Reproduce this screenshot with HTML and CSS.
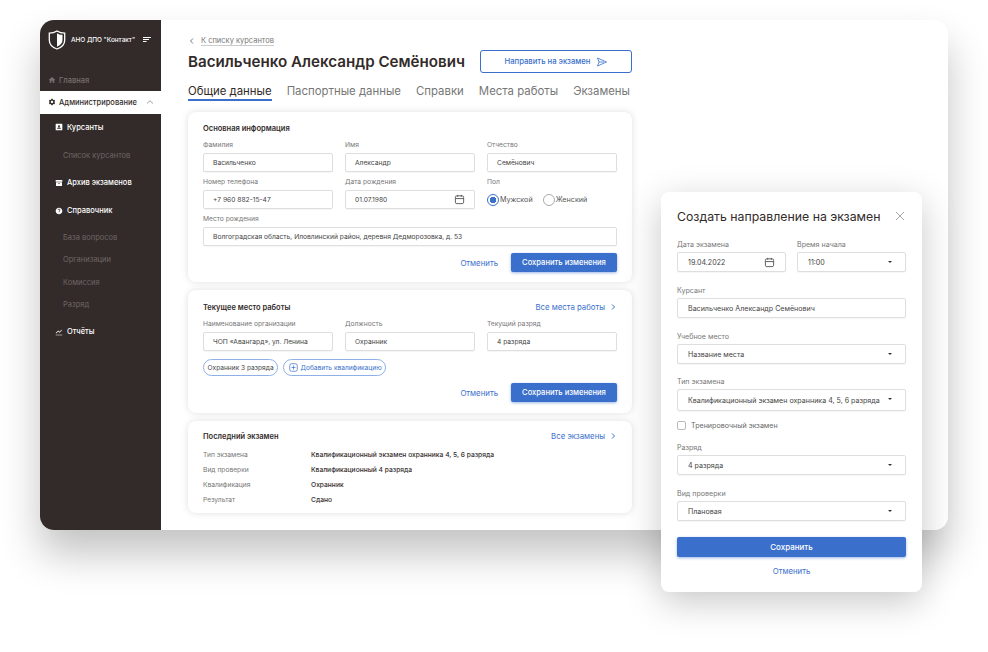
FILE: index.html
```html
<!DOCTYPE html>
<html lang="ru">
<head>
    <meta charset="UTF-8">
    <title>Васильченко Александр Семёнович</title>
    <link rel="stylesheet" href="styles.css">
</head>
<body>
    <svg class="sprite" width="0" height="0">
        <symbol id="i-calendar" viewBox="0 0 12 12">
            <rect x="1.5" y="2" width="9" height="8.5" rx="1.6" fill="none" stroke="currentColor"/>
            <path d="M1.5 5h9M4 1v2M8 1v2" fill="none" stroke="currentColor"/>
        </symbol>
        <symbol id="i-right" viewBox="0 0 8 8">
            <path d="M3 1.5 5.5 4 3 6.5" fill="none" stroke="currentColor"/>
        </symbol>
    </svg>

    <div class="window">
        <aside class="sidebar">
            <div class="brand">
                <svg class="brand-logo" viewBox="0 0 18 20">
                    <path d="M9 1C6.500 2.600 4 3.200 1.300 3.200V10c0 4.200 3.200 7.500 7.700 9 4.500-1.500 7.700-4.800 7.700-9V3.200C14 3.200 11.500 2.600 9 1z" fill="none" stroke="#fff" stroke-width="1.300"/>
                    <path d="M9 3.200c1.700 1 3.500 1.500 5.500 1.600V10c0 3-2.200 5.500-5.500 6.800z" fill="#fff"/>
                </svg>
                <span class="brand-name">АНО ДПО "Контакт"</span>
                <svg class="brand-menu" viewBox="0 0 8 6">
                    <path d="M0 .5h8M0 2.500h6M0 4.500h3.500" stroke="#fff" fill="none"/>
                </svg>
            </div>
            <nav class="nav">
                <a class="nav-top">
                    <svg class="nav-icon" viewBox="0 0 24 24"><path d="M10 20v-6h4v6h5v-8h3L12 3 2 12h3v8z"/></svg>
                    Главная
                </a>
                <a class="nav-top nav-open">
                    <svg class="nav-icon" viewBox="0 0 24 24"><path d="M19.140 12.940c.04-.3.06-.61.06-.94 0-.32-.02-.64-.07-.94l2.030-1.580c.18-.14.23-.41.12-.61l-1.920-3.320c-.12-.22-.37-.29-.59-.22l-2.390.96c-.5-.38-1.030-.7-1.620-.94l-.36-2.540c-.04-.24-.24-.41-.48-.41h-3.840c-.24 0-.43.17-.47.41l-.36 2.540c-.59.24-1.130.57-1.620.94l-2.390-.96c-.22-.08-.47 0-.59.22L2.740 8.870c-.12.21-.08.47.12.61l2.030 1.580c-.05.3-.09.63-.09.94s.02.64.07.94l-2.030 1.580c-.18.14-.23.41-.12.61l1.920 3.320c.12.22.37.29.59.22l2.390-.96c.5.38 1.030.7 1.620.94l.36 2.540c.05.24.24.41.48.41h3.840c.24 0 .44-.17.47-.41l.36-2.540c.59-.24 1.130-.56 1.620-.94l2.390.96c.22.08.47 0 .59-.22l1.920-3.320c.12-.22.07-.47-.12-.61l-2.010-1.580zM12 15.600c-1.980 0-3.600-1.620-3.600-3.600s1.620-3.600 3.600-3.600 3.600 1.620 3.600 3.600-1.620 3.600-3.600 3.600z"/></svg>
                    Администрирование
                    <svg class="nav-caret" viewBox="0 0 8 8"><path d="M1 5.500 4 2.800l3 2.700" fill="none" stroke="#8a8a8a" stroke-width=".8"/></svg>
                </a>
                <a class="nav-item nav-gap-s">
                    <svg class="nav-icon" viewBox="0 0 24 24"><path fill-rule="evenodd" d="M4 2h16a2 2 0 0 1 2 2v16a2 2 0 0 1-2 2H4a2 2 0 0 1-2-2V4a2 2 0 0 1 2-2zm8 4.500a3 3 0 1 0 0 6 3 3 0 0 0 0-6zM6 17.500h12c0-2.500-3-3.800-6-3.800s-6 1.300-6 3.800z"/></svg>
                    Курсанты
                </a>
                <a class="nav-sub nav-gap-l">Список курсантов</a>
                <a class="nav-item nav-gap-a">
                    <svg class="nav-icon" viewBox="0 0 24 24"><path fill-rule="evenodd" d="M2 3h20v5H2zM3 9.500h18V21H3zm6 3v2h6v-2z"/></svg>
                    Архив экзаменов
                </a>
                <a class="nav-item nav-gap-m">
                    <svg class="nav-icon" viewBox="0 0 24 24"><path d="M12 2C6.480 2 2 6.480 2 12s4.480 10 10 10 10-4.480 10-10S17.520 2 12 2zm1 17h-2v-2h2v2zm2.070-7.750l-.9.92C13.450 12.900 13 13.500 13 15h-2v-.5c0-1.100.45-2.100 1.170-2.830l1.240-1.260c.37-.36.59-.86.59-1.410 0-1.100-.9-2-2-2s-2 .9-2 2H8c0-2.210 1.790-4 4-4s4 1.790 4 4c0 .88-.36 1.680-.93 2.250z"/></svg>
                    Справочник
                </a>
                <a class="nav-sub nav-gap-a">База вопросов</a>
                <a class="nav-sub">Организации</a>
                <a class="nav-sub">Комиссия</a>
                <a class="nav-sub">Разряд</a>
                <a class="nav-item nav-gap-a">
                    <svg class="nav-icon" viewBox="0 0 24 24"><path d="M2 20h20v2H2zM3.500 16.500l6-6 4 4L21 6.900l-1.400-1.400-6.100 6.100-4-4L2 15z"/></svg>
                    Отчёты
                </a>
            </nav>
        </aside>

        <main class="main">
            <a class="back">
                <svg class="back-icon" viewBox="0 0 8 8"><path d="M5 1.500 2.500 4 5 6.500" fill="none" stroke="currentColor"/></svg>
                <span>К списку курсантов</span>
            </a>
            <div class="head">
                <h1>Васильченко Александр Семёнович</h1>
                <button class="btn-outline">
                    Направить на экзамен
                    <svg class="send" viewBox="0 0 12 12"><path d="M1.500 2 10.500 6l-9 4L3 6zM3 6h5" fill="none" stroke="currentColor" stroke-width=".8"/></svg>
                </button>
            </div>
            <div class="tabs">
                <a class="tab tab-active">Общие данные</a>
                <a class="tab">Паспортные данные</a>
                <a class="tab">Справки</a>
                <a class="tab">Места работы</a>
                <a class="tab">Экзамены</a>
            </div>

            <section class="card">
                <h2>Основная информация</h2>
                <div class="grid">
                    <div class="field"><label>Фамилия</label><div class="input">Васильченко</div></div>
                    <div class="field"><label>Имя</label><div class="input">Александр</div></div>
                    <div class="field"><label>Отчество</label><div class="input">Семёнович</div></div>
                    <div class="field"><label>Номер телефона</label><div class="input">+7 960 882-15-47</div></div>
                    <div class="field">
                        <label>Дата рождения</label>
                        <div class="input">01.07.1980<svg class="cal"><use href="#i-calendar"/></svg></div>
                    </div>
                    <div class="field">
                        <label>Пол</label>
                        <div class="radios">
                            <span class="radio radio-on">Мужской</span>
                            <span class="radio">Женский</span>
                        </div>
                    </div>
                    <div class="field field-wide"><label>Место рождения</label><div class="input">Волгоградская область, Иловлинский район, деревня Дедморозовка, д. 53</div></div>
                </div>
                <div class="actions">
                    <a class="link">Отменить</a>
                    <button class="btn">Сохранить изменения</button>
                </div>
            </section>

            <section class="card card-work">
                <div class="card-head">
                    <h2>Текущее место работы</h2>
                    <a class="more">Все места работы<svg class="more-icon"><use href="#i-right"/></svg></a>
                </div>
                <div class="grid">
                    <div class="field"><label>Наименование организации</label><div class="input">ЧОП «Авангард», ул. Ленина</div></div>
                    <div class="field"><label>Должность</label><div class="input">Охранник</div></div>
                    <div class="field"><label>Текущий разряд</label><div class="input">4 разряда</div></div>
                </div>
                <div class="chips">
                    <span class="chip">Охранник 3 разряда</span>
                    <span class="chip chip-add">
                        <svg class="plus" viewBox="0 0 10 10"><rect x=".8" y=".8" width="8.400" height="8.400" rx="2" fill="none" stroke="currentColor" stroke-width=".8"/><path d="M5 2.800v4.400M2.800 5h4.400" stroke="currentColor" stroke-width=".8"/></svg>
                        Добавить квалификацию
                    </span>
                </div>
                <div class="actions">
                    <a class="link">Отменить</a>
                    <button class="btn">Сохранить изменения</button>
                </div>
            </section>

            <section class="card card-exam">
                <div class="card-head">
                    <h2>Последний экзамен</h2>
                    <a class="more">Все экзамены<svg class="more-icon"><use href="#i-right"/></svg></a>
                </div>
                <dl class="facts">
                    <dt>Тип экзамена</dt><dd>Квалификационный экзамен охранника 4, 5, 6 разряда</dd>
                    <dt>Вид проверки</dt><dd>Квалификационный 4 разряда</dd>
                    <dt>Квалификация</dt><dd>Охранник</dd>
                    <dt>Результат</dt><dd>Сдано</dd>
                </dl>
            </section>
        </main>
    </div>

    <div class="modal">
        <div class="modal-head">
            <h3>Создать направление на экзамен</h3>
            <svg class="close" viewBox="0 0 10 10"><path d="M1 1l8 8M9 1 1 9" stroke="#8f8f8f" stroke-width=".8" fill="none"/></svg>
        </div>
        <div class="modal-row">
            <div class="mfield"><label>Дата экзамена</label><div class="input">19.04.2022<svg class="cal"><use href="#i-calendar"/></svg></div></div>
            <div class="mfield"><label>Время начала</label><div class="input select">11:00</div></div>
        </div>
        <div class="mfield"><label>Курсант</label><div class="input">Васильченко Александр Семёнович</div></div>
        <div class="mfield"><label>Учебное место</label><div class="input select">Название места</div></div>
        <div class="mfield mfield-tall"><label>Тип экзамена</label><div class="input select">Квалификационный экзамен охранника 4, 5, 6 разряда</div></div>
        <div class="check"><span class="box"></span>Тренировочный экзамен</div>
        <div class="mfield mfield-after"><label>Разряд</label><div class="input select">4 разряда</div></div>
        <div class="mfield"><label>Вид проверки</label><div class="input select">Плановая</div></div>
        <button class="btn btn-full">Сохранить</button>
        <a class="link link-center">Отменить</a>
    </div>
</body>
</html>
```

FILE: styles.css
```css
* {
    box-sizing: border-box;
}

body {
    margin: 0;
    height: 652px;
    overflow: hidden;
    position: relative;
    background: #fff;
    font-family: Inter, "Noto Sans", sans-serif;
    font-size: 6.7px;
    color: #332b2a;
}

.sprite {
    position: absolute;
}

.window {
    position: absolute;
    left: 40px;
    top: 20px;
    width: 908px;
    height: 510px;
    display: flex;
    background: #fff;
    border-radius: 14px;
    overflow: hidden;
}

/* тень окна отдельно, overflow её не режет */
body::before {
    content: "";
    position: absolute;
    left: 40px;
    top: 20px;
    width: 908px;
    height: 510px;
    border-radius: 14px;
    box-shadow: 0 24px 40px rgba(0, 0, 0, .24);
}

.sidebar {
    width: 121px;
    flex: none;
    background: #332b2a;
    color: #fff;
    font-size: 7.5px;
}

.brand {
    display: flex;
    align-items: center;
    height: 40px;
    padding-left: 8px;
}

.brand-logo {
    width: 18px;
    height: 20px;
    margin-right: 5px;
}

.brand-name {
    font-size: 6.4px;
    font-weight: 500;
    white-space: nowrap;
}

.brand-menu {
    width: 8px;
    height: 6px;
    margin-left: 8px;
}

.nav {
    display: flex;
    flex-direction: column;
    padding-top: 8.5px;
}

.nav-top,
.nav-item {
    display: flex;
    align-items: center;
    height: 23px;
    font-weight: 500;
}

.nav-top {
    padding-left: 8px;
    color: #77706f;
}

.nav-open {
    background: #fff;
    color: #332b2a;
    margin-top: -1px;
}

.nav-item {
    padding-left: 15px;
}

.nav-sub {
    display: flex;
    align-items: center;
    height: 22.5px;
    padding-left: 23px;
    color: #6d6665;
}

.nav-gap-s {
    margin-top: 2px;
}

.nav-gap-a {
    margin-top: 4px;
}

.nav-gap-m {
    margin-top: 5px;
}

.nav-gap-l {
    margin-top: 6px;
}

.nav-icon {
    width: 8px;
    height: 8px;
    margin-right: 3px;
    fill: currentColor;
    flex: none;
}

.nav-item .nav-icon {
    margin-right: 4px;
}

.nav-caret {
    width: 8px;
    height: 8px;
    margin-left: 9px;
}

.main {
    flex: 1;
    padding: 16px 0 0 27px;
}

.back {
    display: flex;
    align-items: center;
    height: 10px;
    color: #777;
    font-size: 7.5px;
}

.back-icon {
    width: 8px;
    height: 8px;
    margin-right: 5px;
}

.back span {
    border-bottom: 1px solid #ccc;
    line-height: 9px;
}

.head {
    display: flex;
    align-items: center;
    width: 444px;
    height: 23px;
    margin-top: 4px;
}

h1 {
    margin: 0;
    font-size: 15.15px;
    font-weight: 600;
    white-space: nowrap;
}

.btn-outline {
    display: flex;
    align-items: center;
    justify-content: center;
    width: 152px;
    height: 23px;
    margin-left: auto;
    background: #fff;
    border: 1px solid #3a70cc;
    border-radius: 3px;
    font: 500 7.7px Inter, sans-serif;
    color: #3a70cc;
}

.send {
    width: 12px;
    height: 12px;
    margin-left: 5px;
}

.tabs {
    display: flex;
    gap: 15px;
    margin-top: 10px;
}

.tab {
    height: 18px;
    font-size: 11.4px;
    line-height: 16px;
    color: #777;
    white-space: nowrap;
}

.tab-active {
    color: #332b2a;
    border-bottom: 2px solid #3a70cc;
}

.card {
    width: 444px;
    margin-top: 11px;
    padding: 10px 15px 10px;
    background: #fff;
    border-radius: 8px;
    box-shadow: 0 0 7px rgba(0, 0, 0, .13);
}

.card-work {
    margin-top: 8px;
    padding-bottom: 11px;
}

.card-exam {
    margin-top: 8px;
    padding-top: 8px;
    padding-bottom: 6px;
}

h2 {
    margin: 0;
    font-size: 7.5px;
    font-weight: 600;
    line-height: 13px;
}

.card-head {
    display: flex;
    align-items: center;
    justify-content: space-between;
    height: 14px;
}

.more {
    display: flex;
    align-items: center;
    color: #3a70cc;
    font-size: 7.8px;
}

.more-icon {
    width: 8px;
    height: 8px;
    margin: 0 0 0 4px;
}

.grid {
    display: grid;
    grid-template-columns: repeat(3, 130px);
    gap: 5px 12px;
    margin-top: 5px;
}

.field-wide {
    grid-column: 1 / -1;
}

label {
    display: block;
    height: 10px;
    margin-bottom: 3px;
    line-height: 11px;
    color: #777;
}

.input {
    display: flex;
    align-items: center;
    justify-content: space-between;
    height: 19px;
    padding: 0 9px;
    background: #fff;
    border: 1px solid #dedede;
    border-radius: 2px;
    box-shadow: 0 1px 1px rgba(0, 0, 0, .04);
    color: #444;
    white-space: nowrap;
}

.cal {
    width: 11px;
    height: 11px;
    color: #555;
}

.radios {
    display: flex;
    align-items: center;
    gap: 10px;
    height: 19px;
}

.radio {
    display: flex;
    align-items: center;
    color: #555;
    font-size: 7.2px;
}

.radio::before {
    content: "";
    width: 10px;
    height: 10px;
    margin-right: 1px;
    border: 1px solid #aaa;
    border-radius: 50%;
}

.radio-on::before {
    border-color: #3a70cc;
    background: radial-gradient(circle, #3a70cc 0 3px, #fff 3.5px);
}

.actions {
    display: flex;
    align-items: center;
    justify-content: flex-end;
    gap: 13px;
    margin-top: 7px;
}

.link {
    color: #3a70cc;
    font-size: 7.8px;
}

.btn {
    width: 106px;
    height: 19px;
    padding: 0;
    background: #3a70cc;
    border: 0;
    border-radius: 2px;
    box-shadow: 0 1px 3px rgba(58, 112, 204, .5);
    color: #fff;
    font: 500 7.6px Inter, sans-serif;
}

.chips {
    display: flex;
    gap: 5px;
    margin-top: 8px;
}

.chip {
    display: flex;
    align-items: center;
    height: 17px;
    padding: 0 3.5px;
    border: 1px solid #8fb0e6;
    border-radius: 9px;
    color: #444;
    font-size: 6.6px;
    white-space: nowrap;
}

.chip-add {
    color: #3a70cc;
}

.plus {
    width: 9px;
    height: 9px;
    margin: 0 3px 0 1px;
}

.facts {
    display: grid;
    grid-template-columns: 108px 1fr;
    grid-auto-rows: 15px;
    align-items: center;
    margin: 4px 0 0;
}

dt {
    color: #777;
}

dd {
    margin: 0;
    font-weight: 500;
}

.modal {
    position: absolute;
    left: 661px;
    top: 192px;
    width: 261px;
    height: 400px;
    padding: 14px 16px 0;
    background: #fff;
    border-radius: 8px;
    box-shadow: 0 10px 36px rgba(0, 0, 0, .22);
    font-size: 7.1px;
}

.modal-head {
    display: flex;
    align-items: center;
    justify-content: space-between;
    height: 20px;
    padding-right: 1px;
}

h3 {
    margin: 0;
    font-size: 12.3px;
    font-weight: 400;
    white-space: nowrap;
}

.close {
    width: 10px;
    height: 10px;
}

.modal-row {
    display: grid;
    grid-template-columns: 109px 109px;
    gap: 11px;
}

.mfield {
    margin-top: 13px;
}

.mfield .input {
    height: 20px;
    padding: 0 10px;
}

.mfield-tall {
    margin-top: 12px;
}

.mfield-tall .input {
    height: 22px;
}

.mfield-after {
    margin-top: 10px;
}

.select {
    position: relative;
}

.select::after {
    content: "";
    position: absolute;
    right: 13px;
    top: 8px;
    border: 2.5px solid transparent;
    border-top-color: #333;
    border-bottom: 0;
}

.check {
    display: flex;
    align-items: center;
    height: 14px;
    margin-top: 7px;
    color: #666;
}

.box {
    width: 9px;
    height: 9px;
    margin-right: 5px;
    border: 1px solid #bbb;
    border-radius: 2px;
}

.btn-full {
    display: block;
    width: 229px;
    height: 20px;
    margin-top: 16px;
    font-size: 8px;
}

.link-center {
    display: block;
    margin-top: 9px;
    text-align: center;
}
```
